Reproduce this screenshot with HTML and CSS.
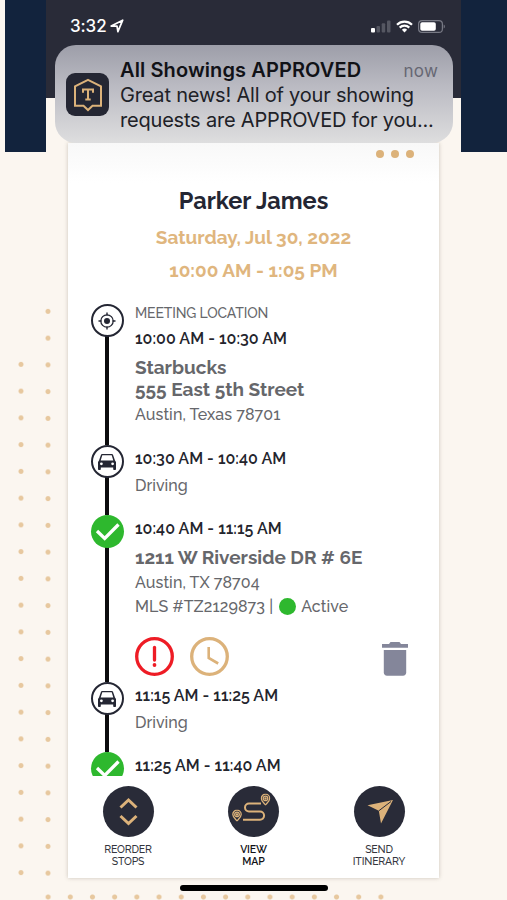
FILE: index.html
```html
<!DOCTYPE html>
<html lang="en">
  <head>
    <meta charset="UTF-8" />
    <meta name="viewport" content="width=device-width, initial-scale=1.0" />
    <title>Showing Itinerary</title>
    <link rel="stylesheet" href="styles.css">
  </head>
  <body>
    <!-- Shared icons -->
    <svg class="defs" width="0" height="0">
      <symbol id="car" viewBox="0 0 18 16">
        <path fill-rule="evenodd" d="M3 .8C3.200.3 3.600 0 4.200 0h9.600c.6 0 1 .3 1.200.8L17 6.500l1 1.500v7.200c0 .5-.3.8-.8.8h-1.200c-.5 0-.8-.3-.8-.8V13.500H2.800v1.700c0 .5-.3.8-.8.8H.8c-.5 0-.8-.3-.8-.8V8l1-1.500zM4.300 1.300 2.700 6.400h12.600L13.700 1.300zM3.400 8.400a1.400 1.400 0 1 0 0 2.800 1.400 1.400 0 0 0 0-2.800zm11.200 0a1.400 1.400 0 1 0 0 2.800 1.400 1.400 0 0 0 0-2.800z" />
      </symbol>
      <symbol id="check" viewBox="0 0 33 33">
        <path d="M6 16l7.700 7.500L27.500 9.500" fill="none" stroke="#fff" stroke-width="3.300" />
      </symbol>
      <symbol id="pin" viewBox="0 0 10 12">
        <path d="M5 11.400C3.500 9.500.8 7.400.8 4.900a4.200 4.200 0 0 1 8.400 0c0 2.500-2.700 4.600-4.200 6.500z" />
        <circle cx="5" cy="4.900" r="2.300" />
        <circle cx="5" cy="4.900" r=".6" />
      </symbol>
    </svg>

    <div class="page">
      <div class="dots dots-outer"></div>
      <div class="dots dots-inner"></div>
      <div class="dots dots-bottom"></div>

      <div class="side side-left"></div>
      <div class="phone">
        <div class="status-bar">
          <span class="clock">3:32</span>
          <svg class="location" width="14" height="14" viewBox="0 0 14 14">
            <path d="M1.200 7.100 12.700 1.200 7.900 12.700 7 7.200z" fill="none" stroke="#fff" stroke-width="1.700" stroke-linejoin="round" />
          </svg>
          <svg class="signal" width="20" height="13" viewBox="0 0 20 13">
            <rect x="0" y="8" width="4" height="4.500" rx="1" fill="#fff" />
            <g fill="#555762">
              <rect x="5.500" y="6" width="3.500" height="6.500" rx="1" />
              <rect x="10.700" y="3.300" width="3.500" height="9.200" rx="1" />
              <rect x="16" y="0.500" width="3.500" height="12" rx="1" />
            </g>
          </svg>
          <svg class="wifi" width="17" height="13" viewBox="0 0 17 13">
            <path d="M1 4.700a10.700 10.700 0 0 1 15 0M3.700 7.600a6.800 6.800 0 0 1 9.600 0" fill="none" stroke="#fff" stroke-width="2.200" />
            <path d="M5.900 9.800a3.700 3.700 0 0 1 5.200 0L8.500 12.600z" fill="#fff" />
          </svg>
          <svg class="battery" width="28" height="13" viewBox="0 0 28 13">
            <rect x=".6" y=".6" width="23.800" height="11.800" rx="3.500" fill="none" stroke="#777984" stroke-width="1.200" />
            <rect x="2.300" y="2.300" width="15.500" height="8.400" rx="1.800" fill="#fff" />
            <path d="M25.700 4.500c1.600.5 1.600 3.500 0 4z" fill="#777984" />
          </svg>
        </div>

        <div class="notification">
          <div class="app-icon">
            <svg width="30" height="34" viewBox="0 0 30 34">
              <path d="M15 1.800 28 8.300v19.400h-8.500L15 32l-4.500-4.300H2V8.300z" fill="none" stroke="#dcb27a" stroke-width="2" />
              <path d="M10 14.800v-3.300h10v3.300M15 11.500v10M12.300 21.600h5.400" fill="none" stroke="#dcb27a" stroke-width="2" />
            </svg>
          </div>
          <div class="notification-text">
            <div class="notification-head">
              <strong>All Showings APPROVED</strong>
              <span class="when">now</span>
            </div>
            <div>Great news! All of your showing</div>
            <div>requests are APPROVED for you...</div>
          </div>
        </div>

        <div class="card">
          <div class="more"><i></i><i></i><i></i></div>
          <h1>Parker James</h1>
          <div class="date">Saturday, Jul 30, 2022</div>
          <div class="hours">10:00 AM - 1:05 PM</div>

          <div class="timeline">
            <div class="stop stop-meeting">
              <div class="marker">
                <svg width="18" height="18" viewBox="0 0 18 18">
                  <circle cx="9" cy="9" r="6.200" fill="none" stroke="#242633" stroke-width="1.300" />
                  <circle cx="9" cy="9" r="3" fill="#242633" />
                  <path d="M9 .5v3M9 14.500v3M.5 9h3M14.500 9h3" stroke="#242633" stroke-width="1.400" />
                </svg>
              </div>
              <div class="details">
                <div class="label">MEETING LOCATION</div>
                <div class="time">10:00 AM - 10:30 AM</div>
                <div class="name">Starbucks<br />555 East 5th Street</div>
                <div class="sub">Austin, Texas 78701</div>
              </div>
            </div>

            <div class="stop stop-drive">
              <div class="marker"><svg width="18" height="16"><use href="#car" /></svg></div>
              <div class="details">
                <div class="time">10:30 AM - 10:40 AM</div>
                <div class="driving">Driving</div>
              </div>
            </div>

            <div class="stop stop-showing">
              <div class="marker marker-done"><svg width="33" height="33"><use href="#check" /></svg></div>
              <div class="details">
                <div class="time">10:40 AM - 11:15 AM</div>
                <div class="name">1211 W Riverside DR # 6E</div>
                <div class="sub">Austin, TX 78704</div>
                <div class="sub mls">MLS #TZ2129873 | <i class="active-dot"></i><span>Active</span></div>
                <div class="actions">
                  <svg width="39" height="39" viewBox="0 0 39 39" fill="none" stroke="#ee1c25">
                    <circle cx="19.500" cy="19.500" r="17.800" stroke-width="3.300" />
                    <path d="M19.500 10.500v12.500" stroke-width="3.300" stroke-linecap="round" />
                    <circle cx="19.500" cy="28" r="1.900" fill="#ee1c25" stroke="none" />
                  </svg>
                  <svg width="39" height="39" viewBox="0 0 39 39" fill="none" stroke="#dcb27a">
                    <circle cx="19.500" cy="19.500" r="17.800" stroke-width="3.300" />
                    <path d="M18.700 10v11l9.500 5.500" stroke-width="2.600" />
                  </svg>
                  <svg class="trash" width="26" height="34" viewBox="0 0 26 34" fill="#84869a">
                    <path d="M0 2h7l1.500-2h9L19 2h7v3.800H0z" />
                    <path d="M1.800 8h22.400v22.500c0 2-1.300 3.200-3.200 3.200H5c-1.900 0-3.200-1.200-3.200-3.200z" />
                  </svg>
                </div>
              </div>
            </div>

            <div class="stop stop-drive">
              <div class="marker"><svg width="18" height="16"><use href="#car" /></svg></div>
              <div class="details">
                <div class="time">11:15 AM - 11:25 AM</div>
                <div class="driving">Driving</div>
              </div>
            </div>

            <div class="stop stop-last">
              <div class="marker marker-done"><svg width="33" height="33"><use href="#check" /></svg></div>
              <div class="details">
                <div class="time">11:25 AM - 11:40 AM</div>
              </div>
            </div>
          </div>

          <div class="toolbar">
            <div class="tool">
              <div class="tool-icon">
                <svg width="51" height="51" viewBox="0 0 51 51" fill="none" stroke="#dcb27a" stroke-width="3">
                  <path d="M17.500 21.500l8-7.500 8 7.500M17.500 30l8 7.500 8-7.500" />
                </svg>
              </div>
              REORDER<br />STOPS
            </div>
            <div class="tool tool-active">
              <div class="tool-icon">
                <svg width="51" height="51" viewBox="0 0 51 51" fill="none" stroke="#dcb27a" stroke-width="1.300">
                  <path d="M33 17.500H21a4 4 0 0 0 0 8h11a4 4 0 0 1 0 8.200H15" stroke-width="2" />
                  <use href="#pin" x="32.500" y="7.500" width="10" height="12" />
                  <use href="#pin" x="4" y="23.500" width="10" height="12" />
                </svg>
              </div>
              VIEW<br />MAP
            </div>
            <div class="tool">
              <div class="tool-icon">
                <svg width="51" height="51" viewBox="0 0 51 51">
                  <path d="M13.500 19.300 39 14 27 37.500 24.800 24.800z" fill="#dcb27a" />
                  <path d="M24.800 24.800 37 15.500" stroke="#292b38" stroke-width="1" />
                </svg>
              </div>
              SEND<br />ITINERARY
            </div>
          </div>
        </div>
        <div class="home-indicator"></div>
      </div>
      <div class="side side-right"></div>
    </div>
  </body>
</html>
```
FILE: styles.css
```css
* {
  box-sizing: border-box;
}

body {
  margin: 0;
  font-family: Raleway, Lato, "Open Sans", sans-serif;
}

svg {
  display: block;
  flex: none;
}

.defs {
  position: absolute;
}

.page {
  position: relative;
  display: flex;
  width: 507px;
  height: 900px;
  padding-left: 5px;
  overflow: hidden;
  background: #fbf6f0;
}

/* Dotted background pattern */
.dots {
  position: absolute;
  background-image: radial-gradient(circle, #e7c89f 2px, transparent 3px);
}

.dots-outer {
  left: 18px;
  top: 351px;
  width: 6px;
  height: 535px;
  background-size: 6px 26.75px;
}

.dots-inner {
  left: 45px;
  top: 298px;
  width: 6px;
  height: 588px;
  background-size: 6px 26.75px;
}

.dots-bottom {
  left: 37px;
  top: 894px;
  width: 355px;
  height: 6px;
  background-size: 22.2px 6px;
}

.side {
  height: 152px;
  background: #12233d;
}

.side-left {
  width: 41px;
}

.side-right {
  width: 46px;
}

.phone {
  position: relative;
  width: 415px;
  height: 900px;
  background: linear-gradient(#292b38 98px, transparent 98px);
}

.status-bar {
  display: flex;
  align-items: center;
  height: 45px;
  padding: 7px 15px 0 24px;
  color: #fff;
}

.clock {
  width: 36px;
  font: 500 17px/20px Inter, sans-serif;
  letter-spacing: -0.1px;
}

.location {
  margin-left: 4px;
}

.signal {
  margin-left: auto;
}

.wifi {
  margin-left: 5px;
}

.battery {
  margin-left: 5px;
}

.notification {
  position: relative;
  z-index: 1;
  display: flex;
  align-items: center;
  width: 398px;
  height: 98px;
  margin-left: 9px;
  padding: 1px 15px 0 11px;
  border-radius: 21px;
  background: linear-gradient(#9d9ea9, #b9b9c1 40%, #dededf);
  font-family: Inter, sans-serif;
  color: #202127;
}

.app-icon {
  display: flex;
  flex: none;
  align-items: center;
  justify-content: center;
  width: 43px;
  height: 43px;
  border-radius: 9px;
  background: #242633;
}

.notification-text {
  flex: 1;
  min-width: 0;
  margin-left: 11px;
  font-size: 20px;
  line-height: 25px;
  letter-spacing: -0.2px;
  white-space: nowrap;
}

.notification-head {
  display: flex;
  justify-content: space-between;
  height: 27px;
}

.notification-head strong {
  font-weight: 600;
  font-size: 20px;
  line-height: 29px;
  letter-spacing: 0.1px;
  color: #111217;
}

.when {
  font-size: 17px;
  line-height: 31px;
  letter-spacing: 0.2px;
  color: #666773;
}

.card {
  display: flex;
  flex-direction: column;
  width: 371px;
  height: 735px;
  margin: 0 0 0 22px;
  background: linear-gradient(#f8f8f8, #fff 40px);
  box-shadow: 0 0 4px rgba(90, 80, 60, 0.3);
}

.more {
  display: flex;
  justify-content: flex-end;
  gap: 7px;
  padding: 7px 25px 0 0;
}

.more i {
  width: 8px;
  height: 8px;
  border-radius: 50%;
  background: #dcb27a;
}

h1 {
  margin: 29px 0 0;
  font-size: 23.5px;
  line-height: 28px;
  text-align: center;
  color: #242633;
}

.date,
.hours {
  font-size: 19px;
  font-weight: 700;
  line-height: 24px;
  text-align: center;
  color: #e0b67e;
}

.date {
  margin-top: 10px;
}

.hours {
  margin-top: 9px;
}

.timeline {
  height: 472px;
  margin-top: 22px;
  padding-left: 22.5px;
  overflow: hidden;
}

.stop {
  position: relative;
  display: flex;
  gap: 11.5px;
}

/* Connecting line behind the markers */
.stop::before {
  content: "";
  position: absolute;
  left: 14.5px;
  top: 16px;
  bottom: 0;
  width: 4px;
  background: #0c0c0e;
}

.stop-meeting {
  height: 141px;
}

.stop-drive {
  height: 70px;
}

.stop-showing {
  height: 167px;
}

.stop-last {
  height: 33px;
}

.marker {
  position: relative;
  display: flex;
  flex: none;
  align-items: center;
  justify-content: center;
  width: 33px;
  height: 33px;
  border: 2.5px solid #242633;
  border-radius: 50%;
  background: #fff;
  fill: #242633;
}

.marker-done {
  border: 0;
  background: #2eb82e;
}

.details {
  flex: 1;
  padding-top: 4px;
  white-space: nowrap;
}

.stop-meeting .details {
  padding-top: 1px;
}

.label {
  margin-bottom: 7px;
  font-size: 14px;
  font-weight: 500;
  line-height: 17px;
  letter-spacing: -0.15px;
  color: #66676b;
}

.time {
  font-size: 16px;
  font-weight: 600;
  line-height: 20px;
  letter-spacing: 0.05px;
  color: #24252d;
}

.name {
  margin-top: 7px;
  font-size: 19px;
  font-weight: 700;
  line-height: 22px;
  color: #66676b;
}

.sub {
  display: flex;
  align-items: center;
  margin-top: 5px;
  font-size: 16px;
  font-weight: 500;
  line-height: 20px;
  letter-spacing: 0.1px;
  color: #66676b;
}

.mls {
  margin-top: 4px;
}

.driving {
  margin-top: 7px;
  font-size: 16px;
  font-weight: 500;
  line-height: 20px;
  color: #66676b;
}

.active-dot {
  width: 17px;
  height: 17px;
  margin: -2px 5px 0 6px;
  border-radius: 50%;
  background: #2eb82e;
}

.actions {
  display: flex;
  align-items: center;
  gap: 16px;
  margin-top: 20px;
  padding-right: 31px;
}

.trash {
  margin: 4px 0 0 auto;
}

.toolbar {
  display: flex;
  justify-content: space-between;
  padding: 10px 20px 0;
}

.tool {
  width: 80px;
  font-size: 10.5px;
  font-weight: 500;
  line-height: 12px;
  letter-spacing: -0.15px;
  text-align: center;
  color: #35363e;
}

.tool-active {
  font-weight: 600;
  color: #111217;
}

.tool-icon {
  width: 51px;
  height: 51px;
  margin: 0 auto 6px;
  border-radius: 50%;
  background: #292b38;
}

.home-indicator {
  width: 148px;
  height: 6px;
  margin: 7px 0 0 134px;
  border-radius: 3px;
  background: #000;
}
```
